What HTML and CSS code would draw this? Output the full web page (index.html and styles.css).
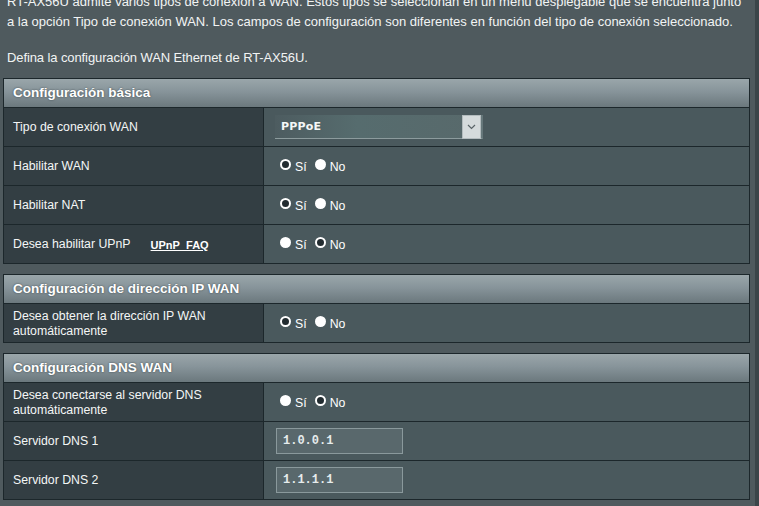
FILE: index.html
```html
<!DOCTYPE html>
<html lang="es">
<head>
<meta charset="utf-8">
<link rel="stylesheet" href="styles.css">
</head>
<body>
<div class="page">
  <div class="intro">
    <p class="desc">RT-AX56U admite varios tipos de conexión a WAN. Estos tipos se seleccionan en un menú desplegable que se encuentra junto a la opción Tipo de conexión WAN. Los campos de configuración son diferentes en función del tipo de conexión seleccionado.</p>
    <p class="desc2">Defina la configuración WAN Ethernet de RT-AX56U.</p>
  </div>

  <div class="section">
    <div class="sec-head">Configuración básica</div>
    <div class="row">
      <div class="label">Tipo de conexión WAN</div>
      <div class="value">
        <div class="select"><span class="sel-text">PPPoE</span><span class="sel-btn"><svg width="9" height="6" viewBox="0 0 9 6"><path d="M1 1 L4.5 4.5 L8 1" fill="none" stroke="#5a6468" stroke-width="1.2"/></svg></span></div>
      </div>
    </div>
    <div class="row">
      <div class="label">Habilitar WAN</div>
      <div class="value"><span class="radio on"></span><span class="opt">Sí</span><span class="radio"></span><span class="opt">No</span></div>
    </div>
    <div class="row">
      <div class="label">Habilitar NAT</div>
      <div class="value"><span class="radio on"></span><span class="opt">Sí</span><span class="radio"></span><span class="opt">No</span></div>
    </div>
    <div class="row">
      <div class="label">Desea habilitar UPnP <a class="faq">UPnP&nbsp;&nbsp;FAQ</a></div>
      <div class="value"><span class="radio"></span><span class="opt">Sí</span><span class="radio on"></span><span class="opt">No</span></div>
    </div>
  </div>

  <div class="section">
    <div class="sec-head">Configuración de dirección IP WAN</div>
    <div class="row">
      <div class="label two">Desea obtener la dirección IP WAN automáticamente</div>
      <div class="value"><span class="radio on"></span><span class="opt">Sí</span><span class="radio"></span><span class="opt">No</span></div>
    </div>
  </div>

  <div class="section">
    <div class="sec-head">Configuración DNS WAN</div>
    <div class="row">
      <div class="label two">Desea conectarse al servidor DNS automáticamente</div>
      <div class="value"><span class="radio"></span><span class="opt">Sí</span><span class="radio on"></span><span class="opt">No</span></div>
    </div>
    <div class="row">
      <div class="label">Servidor DNS 1</div>
      <div class="value"><div class="input">1.0.0.1</div></div>
    </div>
    <div class="row">
      <div class="label">Servidor DNS 2</div>
      <div class="value"><div class="input">1.1.1.1</div></div>
    </div>
  </div>
</div>
<div class="edge"></div>
</body>
</html>
```

FILE: styles.css
```css
html, body {
  margin: 0;
  padding: 0;
  height: 100%;
  overflow: hidden;
}
body {
  background: #4f5a5e;
  font-family: "Liberation Sans", Arial, sans-serif;
  color: #ffffff;
  position: relative;
}
.page {
  padding: 0 10px 0 3px;
}
.intro {
  margin-top: -8px;
  padding-left: 4px;
  font-size: 13px;
  line-height: 20px;
  color: #f2f4f4;
}
.intro p {
  margin: 0;
}
.desc2 {
  margin-top: 16px !important;
  letter-spacing: -0.1px;
}
.section {
  width: 745px;
  border: 1px solid #1c272b;
  margin-top: 10px;
}
.section + .section {
  margin-top: 10px;
}
.sec-head {
  height: 28px;
  line-height: 27px;
  padding-left: 9px;
  font-size: 13.5px;
  font-weight: bold;
  color: #ffffff;
  text-shadow: 0 0 2px #3a4549;
  background: linear-gradient(to bottom, #9aa6aa 0%, #87949a 45%, #6b787d 100%);
  border-bottom: 1px solid #1c272b;
}
.row {
  display: flex;
  min-height: 38px;
  border-top: 1px solid #1c272b;
}
.sec-head + .row {
  border-top: none;
}
.label {
  width: 250px;
  flex: none;
  padding: 0 0 0 9px;
  background: #333e43;
  border-right: 1px solid #1c272b;
  font-size: 12.3px;
  color: #f4f6f6;
  display: flex;
  align-items: center;
}
.label.two {
  line-height: 15px;
  padding-top: 1px;
  padding-right: 40px;
  width: 210px;
}
.faq {
  color: #ffffff;
  font-weight: bold;
  font-size: 11px;
  text-decoration: underline;
  margin-left: 20px;
  margin-top: 1px;
}
.value {
  flex: 1;
  background: #4a595d;
  display: flex;
  align-items: center;
  padding-left: 11px;
}
.select {
  width: 206px;
  height: 23px;
  display: flex;
  align-items: center;
  justify-content: space-between;
  background: linear-gradient(to right, #4d5c60 0%, #566c6e 40%, #58696b 100%);
  border-bottom: 1px solid #8c9b9d;
  border-right: 2px solid #66777a;
}
.sel-text {
  font-size: 11px;
  font-weight: bold;
  padding-left: 6px;
  color: #f4f7f7;
  font-family: "DejaVu Sans", "Liberation Sans", sans-serif;
  letter-spacing: 0.2px;
}
.sel-btn {
  width: 17px;
  height: 22px;
  background: #d5dbdc;
  border: 1px solid #b3bcbe;
  display: flex;
  align-items: center;
  justify-content: center;
}
.radio {
  width: 11px;
  height: 11px;
  border-radius: 50%;
  background: #ffffff;
  box-sizing: border-box;
  margin: -4px 4px 0 5px;
  flex: none;
}
.radio.on {
  background: #222c30;
  border: 2.5px solid #ffffff;
}
.opt {
  font-size: 12.3px;
  color: #ffffff;
  margin-right: 3px;
  padding-top: 1px;
}
.input {
  width: 119px;
  height: 24px;
  line-height: 24px;
  border: 1px solid #8a999c;
  background: #59686c;
  font-family: "Liberation Mono", "Courier New", monospace;
  font-weight: bold;
  font-size: 12px;
  color: #e6ecec;
  padding-left: 6px;
  box-sizing: content-box;
  margin-left: 1px;
}
.edge {
  position: absolute;
  top: 0;
  right: 0;
  width: 4px;
  height: 100%;
  background: #3b4549;
}
```
